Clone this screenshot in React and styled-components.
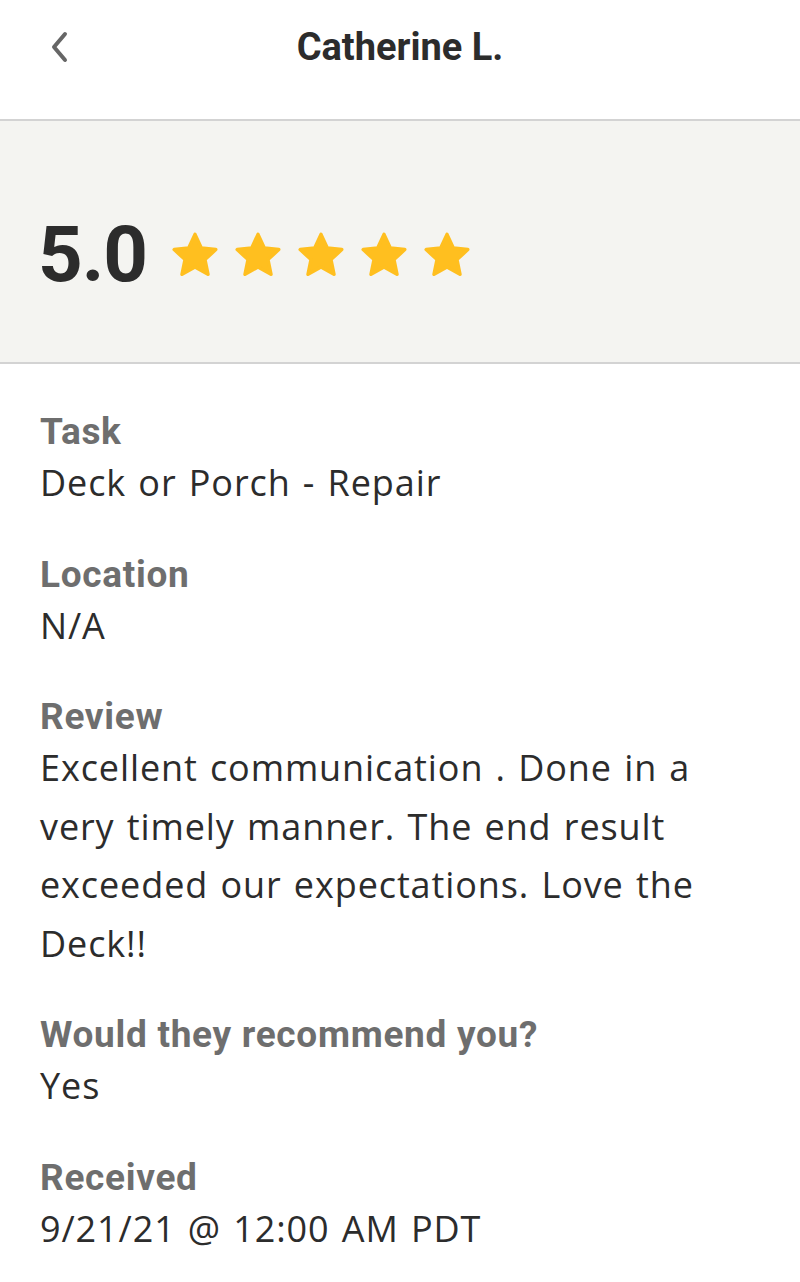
import React from "react";
import styled, { createGlobalStyle } from "styled-components";

const Global = createGlobalStyle`
  html, body { margin: 0; padding: 0; background: #ffffff; }
  body { font-family: Roboto, "Liberation Sans", sans-serif; -webkit-font-smoothing: antialiased; }
`;

const Page = styled.div`
  width: 800px;
  min-height: 1282px;
  background: #ffffff;
`;

const Header = styled.header`
  height: 119px;
  border-bottom: 2px solid #d3d3d3;
  box-sizing: content-box;
`;

const HeaderRow = styled.div`
  height: 94px;
  display: grid;
  grid-template-columns: 100px 1fr 100px;
  align-items: center;
`;

const BackButton = styled.button`
  border: 0;
  background: none;
  padding: 0 0 0 48px;
  display: flex;
  align-items: center;
  height: 40px;
  cursor: pointer;
`;

const Title = styled.h1`
  margin: 0;
  text-align: center;
  font-family: Roboto, "Liberation Sans", sans-serif;
  font-weight: 700;
  font-size: 38px;
  letter-spacing: 0;
  color: #2c2c2c;
`;

const RatingBar = styled.section`
  height: 243px;
  background: #f4f4f1;
  border-bottom: 2px solid #d3d3d3;
  display: flex;
  align-items: center;
  padding-left: 38px;
  padding-top: 26px;
  box-sizing: border-box;
`;

const Score = styled.span`
  font-family: Roboto, "Liberation Sans", sans-serif;
  font-weight: 700;
  font-size: 78px;
  letter-spacing: -1px;
  color: #2c2c2c;
  line-height: 1;
  margin-right: 22px;
`;

const Stars = styled.div`
  display: flex;
  gap: 11px;
`;

const Content = styled.main`
  padding: 45px 40px 0 40px;
  display: flex;
  flex-direction: column;
  gap: 39px;
`;

const Field = styled.div`
  display: flex;
  flex-direction: column;
`;

const Label = styled.div`
  font-family: Roboto, "Liberation Sans", sans-serif;
  font-weight: 700;
  font-size: 37px;
  line-height: 45px;
  letter-spacing: 0.7px;
  color: #6e6e6e;
`;

const Value = styled.div`
  font-family: "Open Sans", "Liberation Sans", sans-serif;
  font-weight: 400;
  font-size: 36px;
  line-height: 58.5px;
  letter-spacing: 0.9px;
  word-spacing: 2px;
  color: #2c2c2c;
  max-width: 705px;
`;

const Star = () => (
  <svg width="52" height="50" viewBox="0 0 24 23">
    <path
      d="M12 2 L14.9 8.3 L21.6 9 L16.6 13.6 L18 20.4 L12 17 L6 20.4 L7.4 13.6 L2.4 9 L9.1 8.3 Z"
      fill="#FFBF1F"
      stroke="#FFBF1F"
      strokeWidth="1.6"
      strokeLinejoin="round"
    />
  </svg>
);

const fields = [
  ["Task", "Deck or Porch - Repair"],
  ["Location", "N/A"],
  ["Review", "Excellent communication . Done in a very timely manner. The end result exceeded our expectations. Love the Deck!!"],
  ["Would they recommend you?", "Yes"],
  ["Received", "9/21/21 @ 12:00 AM PDT"],
];

export default function App() {
  return (
    <Page>
      <Global />
      <Header>
        <HeaderRow>
          <BackButton aria-label="Back">
            <svg width="22" height="34" viewBox="0 0 22 34">
              <path d="M17 4 L6 17 L17 30" fill="none" stroke="#666" strokeWidth="4" strokeLinecap="round" strokeLinejoin="round" />
            </svg>
          </BackButton>
          <Title>Catherine L.</Title>
          <div />
        </HeaderRow>
      </Header>
      <RatingBar>
        <Score>5.0</Score>
        <Stars>
          {[0, 1, 2, 3, 4].map((i) => <Star key={i} />)}
        </Stars>
      </RatingBar>
      <Content>
        {fields.map(([l, v]) => (
          <Field key={l}>
            <Label>{l}</Label>
            <Value>{v}</Value>
          </Field>
        ))}
      </Content>
    </Page>
  );
}
